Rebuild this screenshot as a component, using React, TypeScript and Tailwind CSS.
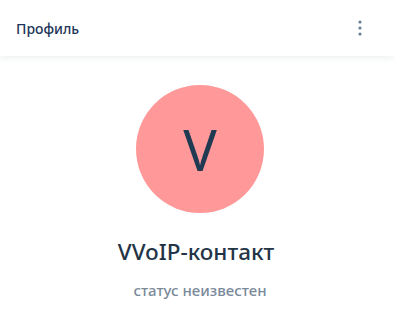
import React from 'react';

function KebabIcon() {
  return (
    <svg width="4" height="16" viewBox="0 0 4 16" className="text-[#6b7c93]">
      <circle cx="2" cy="2" r="1.6" fill="currentColor" />
      <circle cx="2" cy="8" r="1.6" fill="currentColor" />
      <circle cx="2" cy="14" r="1.6" fill="currentColor" />
    </svg>
  );
}

export default function App() {
  return (
    <div className="min-h-[311px] bg-white" style={{ fontFamily: '"Noto Sans", "Open Sans", sans-serif' }}>
      {/* Header */}
      <div className="flex h-14 items-center justify-between bg-white pl-4 pr-[22px] shadow-[0_2px_6px_rgba(30,50,80,0.08)]">
        <h1 className="text-[14px] font-medium text-[#1d3557]">Профиль</h1>
        <button className="flex h-8 w-6 items-center justify-center">
          <KebabIcon />
        </button>
      </div>

      {/* Profile */}
      <div className="flex flex-col items-center pl-[6px] pt-[29px]">
        <div className="flex h-32 w-32 items-center justify-center rounded-full bg-[#ff9999]">
          <span className="text-[56px] font-normal leading-none text-[#1f3a52]">V</span>
        </div>
        <h2 className="mt-[24px] pr-[8px] text-[22.5px] font-medium leading-[30px] text-[#243447]">VVoIP-контакт</h2>
        <p className="mt-[13px] text-[15px] font-medium leading-5 text-[#7b8a9a]">статус неизвестен</p>
      </div>
    </div>
  );
}
